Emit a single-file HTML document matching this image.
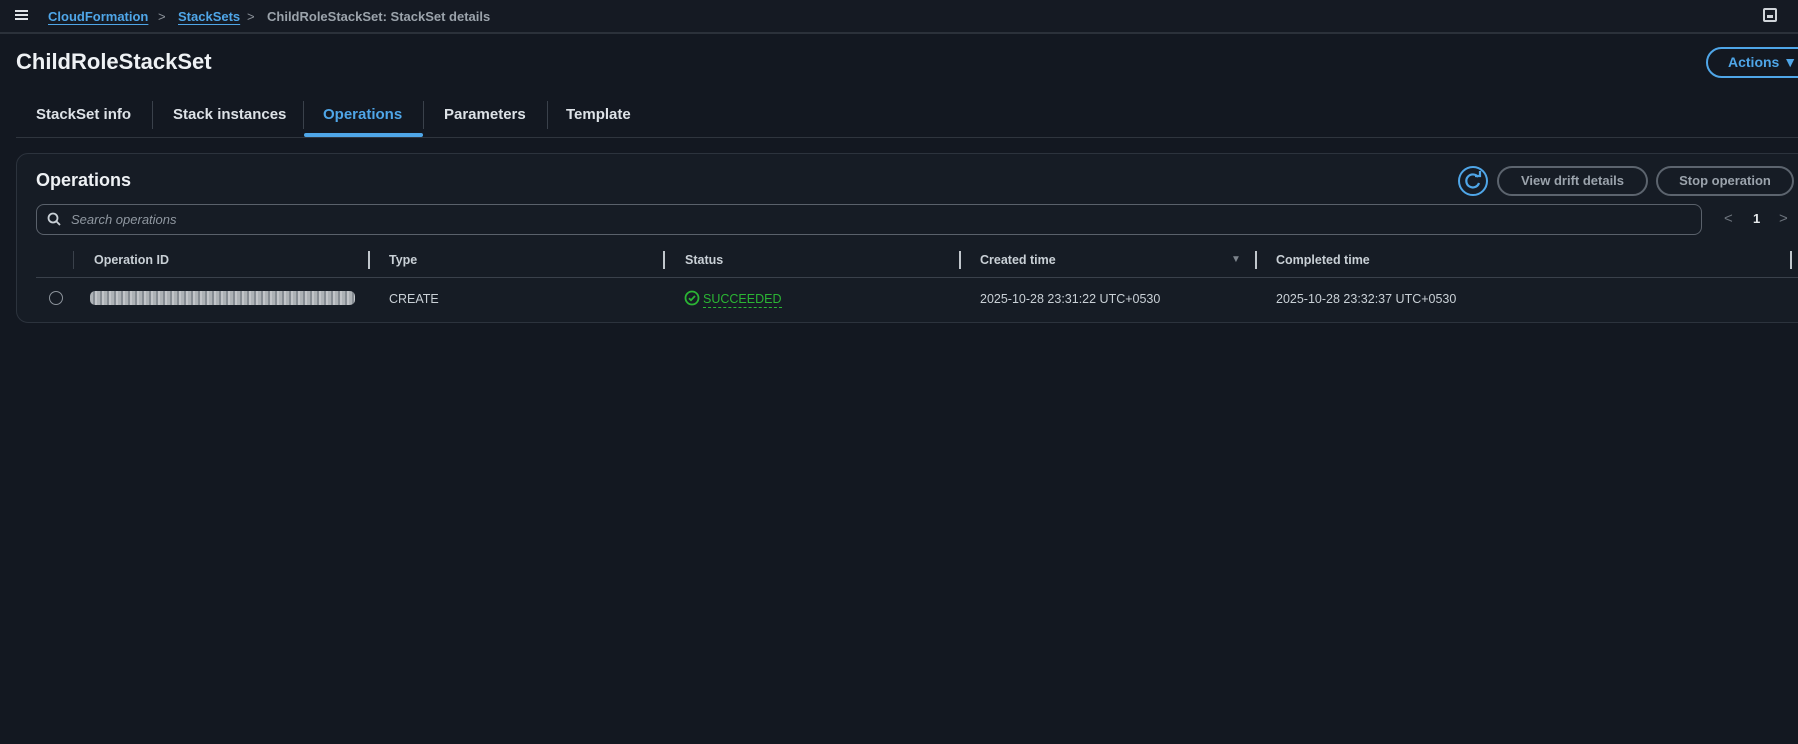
<!DOCTYPE html>
<html><head><meta charset="utf-8"><style>
*{box-sizing:border-box;margin:0;padding:0}
body{width:1798px;height:744px;background:#131821;font-family:"Liberation Sans",sans-serif;color:#d5dbe0;position:relative;overflow:hidden}
.a{position:absolute;white-space:nowrap}
.top{position:absolute;left:0;top:0;width:1798px;height:34px;background:#151a23;border-bottom:2px solid #2b313a}
.bc{font-size:13px;font-weight:bold;top:9px}
.link{color:#4fa6e8;text-decoration:underline;text-underline-offset:3px}
.tab{font-size:15px;font-weight:bold;top:106px;color:#dde2e7}
.sep{position:absolute;width:1px;background:#3a414b}
.box{position:absolute;left:16px;top:153px;width:1800px;height:170px;background:#161c25;border:1px solid #2c333d;border-radius:12px}
.btn{position:absolute;border:2px solid #5c646e;border-radius:16px;color:#9ba3ac;font-size:13px;font-weight:bold;text-align:center;line-height:26px}
.th{font-size:12.5px;font-weight:bold;top:253px;color:#c9d0d6}
.cd{position:absolute;width:2px;height:18px;top:251px;background:#c0c6cc}
.td{font-size:12.5px;top:292px;color:#c9d0d6}
</style></head><body>
<div class="top"></div>
<div class="a" style="left:15px;top:10px;width:13px;height:2px;background:#e0e4e8;box-shadow:0 4px 0 #e0e4e8,0 8px 0 #e0e4e8"></div>
<div class="a bc link" style="left:48px">CloudFormation</div>
<div class="a bc" style="left:158px;color:#8c939b;font-weight:normal">&gt;</div>
<div class="a bc link" style="left:178px">StackSets</div>
<div class="a bc" style="left:247px;color:#8c939b;font-weight:normal">&gt;</div>
<div class="a bc" style="left:267px;color:#9ba3ab">ChildRoleStackSet: StackSet details</div>
<div class="a" style="left:1763px;top:8px;width:14px;height:14px;border:2px solid #d0d5da;border-radius:2px"><div style="position:absolute;left:2px;top:5px;width:6px;height:3px;background:#d0d5da"></div></div>

<div class="a" style="left:16px;top:49px;font-size:22px;font-weight:bold;color:#eef1f4">ChildRoleStackSet</div>
<div class="a" style="left:1706px;top:47px;width:110px;height:31px;border:2px solid #4fa6e8;border-radius:16px;color:#4fa6e8;font-size:14px;font-weight:bold;line-height:27px;padding-left:20px">Actions ▼</div>

<div class="a tab" style="left:36px">StackSet info</div>
<div class="sep" style="left:152px;top:101px;height:28px"></div>
<div class="a tab" style="left:173px">Stack instances</div>
<div class="sep" style="left:303px;top:101px;height:28px"></div>
<div class="a tab" style="left:323px;color:#4fa6e8">Operations</div>
<div class="sep" style="left:423px;top:101px;height:28px"></div>
<div class="a tab" style="left:444px">Parameters</div>
<div class="sep" style="left:547px;top:101px;height:28px"></div>
<div class="a tab" style="left:566px">Template</div>
<div class="a" style="left:304px;top:133px;width:119px;height:4px;background:#4fa6e8;border-radius:2px"></div>
<div class="a" style="left:16px;top:137px;width:1782px;height:1px;background:#2f353e"></div>

<div class="box"></div>
<div class="a" style="left:36px;top:170px;font-size:18px;font-weight:bold;color:#eef1f4">Operations</div>
<svg class="a" style="left:1457px;top:165px" width="32" height="32" viewBox="0 0 32 32"><circle cx="16" cy="16" r="14" fill="none" stroke="#4fa6e8" stroke-width="2"/><path d="M21 12a6.5 6.5 0 1 0 1 6" fill="none" stroke="#4fa6e8" stroke-width="2.2"/><path d="M18 11h5v-5" fill="none" stroke="#4fa6e8" stroke-width="2.2"/></svg>
<div class="btn" style="left:1497px;top:166px;width:151px;height:30px">View drift details</div>
<div class="btn" style="left:1656px;top:166px;width:138px;height:30px">Stop operation</div>

<div class="a" style="left:36px;top:204px;width:1666px;height:31px;border:1px solid #5a616b;border-radius:8px"></div>
<svg class="a" style="left:47px;top:212px" width="14" height="14" viewBox="0 0 14 14"><circle cx="6" cy="6" r="4.5" fill="none" stroke="#c9d0d6" stroke-width="1.8"/><path d="M9.3 9.3L13 13" stroke="#c9d0d6" stroke-width="1.8"/></svg>
<div class="a" style="left:71px;top:212px;font-size:13px;font-style:italic;color:#8f97a0">Search operations</div>
<div class="a" style="left:1724px;top:210px;font-size:15px;color:#6c737c">&lt;</div>
<div class="a" style="left:1753px;top:211px;font-size:13px;font-weight:bold;color:#e6e9ec">1</div>
<div class="a" style="left:1779px;top:210px;font-size:15px;color:#6c737c">&gt;</div>

<div class="sep" style="left:73px;top:251px;height:18px"></div>
<div class="a th" style="left:94px">Operation ID</div>
<div class="cd" style="left:368px"></div><div class="a th" style="left:389px">Type</div>
<div class="cd" style="left:663px"></div><div class="a th" style="left:685px">Status</div>
<div class="cd" style="left:959px"></div><div class="a th" style="left:980px">Created time</div>
<div class="a" style="left:1231px;top:254px;font-size:10px;color:#7d848c">▼</div>
<div class="cd" style="left:1255px"></div><div class="a th" style="left:1276px">Completed time</div>
<div class="cd" style="left:1790px"></div>
<div class="a" style="left:36px;top:277px;width:1762px;height:1px;background:#3a414b"></div>

<div class="a" style="left:49px;top:291px;width:14px;height:14px;border:1.5px solid #8c939b;border-radius:50%"></div>
<div class="a" style="left:90px;top:291px;width:265px;height:14px;background:repeating-linear-gradient(90deg,#c8ccd0 0 3px,#9aa0a6 3px 5px,#e0e3e6 5px 7px);border-radius:5px;opacity:.85"></div>
<div class="a td" style="left:389px">CREATE</div>
<svg class="a" style="left:684px;top:290px" width="16" height="16" viewBox="0 0 16 16"><circle cx="8" cy="8" r="6.5" fill="none" stroke="#2bb534" stroke-width="1.8"/><path d="M5 8.2l2 2 4-4.2" fill="none" stroke="#2bb534" stroke-width="1.8"/></svg>
<div class="a td" style="left:703px;color:#2bb534;border-bottom:1px dashed #2bb534;padding-bottom:1px">SUCCEEDED</div>
<div class="a td" style="left:980px">2025-10-28 23:31:22 UTC+0530</div>
<div class="a td" style="left:1276px">2025-10-28 23:32:37 UTC+0530</div>
</body></html>
